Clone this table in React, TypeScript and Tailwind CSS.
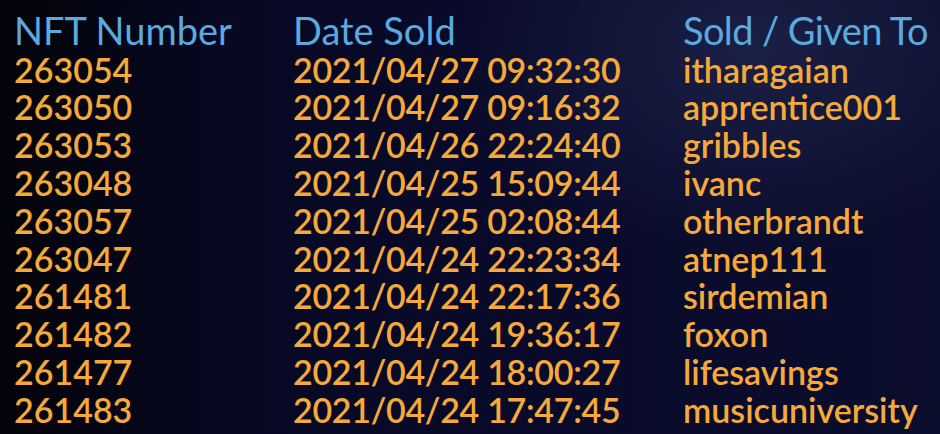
const rows = [
  ['263054', '2021/04/27 09:32:30', 'itharagaian'],
  ['263050', '2021/04/27 09:16:32', 'apprentice001'],
  ['263053', '2021/04/26 22:24:40', 'gribbles'],
  ['263048', '2021/04/25 15:09:44', 'ivanc'],
  ['263057', '2021/04/25 02:08:44', 'otherbrandt'],
  ['263047', '2021/04/24 22:23:34', 'atnep111'],
  ['261481', '2021/04/24 22:17:36', 'sirdemian'],
  ['261482', '2021/04/24 19:36:17', 'foxon'],
  ['261477', '2021/04/24 18:00:27', 'lifesavings'],
  ['261483', '2021/04/24 17:47:45', 'musicuniversity'],
];

const App = () => {
  return (
    <div className="relative h-[434px] w-[940px] overflow-hidden bg-[linear-gradient(90deg,#03030a_0%,#070822_25%,#090a2a_55%,#0b0d2c_100%)] font-['Lato',sans-serif]">
      <div className="pointer-events-none absolute -top-40 right-[-120px] h-[420px] w-[620px] rounded-full bg-[radial-gradient(closest-side,rgba(40,48,90,0.55),rgba(40,48,90,0))]" />
      <table className="relative ml-[14px] mt-[9px] border-collapse text-[34px] font-semibold leading-[37.78px]">
        <thead>
          <tr className="h-[41.7px] text-[38px] leading-[40px] text-[#5aa9df]">
            <th className="w-[279px] p-0 text-left font-normal">NFT Number</th>
            <th className="w-[390px] p-0 text-left font-normal">Date Sold</th>
            <th className="p-0 text-left font-normal tracking-[-0.6px]">Sold / Given To</th>
          </tr>
        </thead>
        <tbody className="text-[#f5a93b]">
          {rows.map(([id, date, who]) => (
            <tr key={id}>
              <td className="p-0">{id}</td>
              <td className="p-0 tracking-[-0.3px]">{date}</td>
              <td className="p-0">{who}</td>
            </tr>
          ))}
        </tbody>
      </table>
    </div>
  );
};

export default App;
